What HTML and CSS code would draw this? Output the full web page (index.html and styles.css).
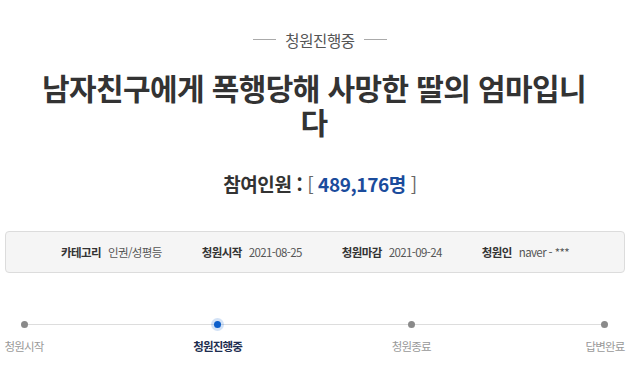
FILE: index.html
```html
<!DOCTYPE html>
<html lang="ko">
<head>
<meta charset="utf-8">
<link rel="stylesheet" href="styles.css">
</head>
<body>
<div class="page">
  <div class="status"><span class="rule"></span><span class="status-text">청원진행중</span><span class="rule"></span></div>
  <h1 class="title">남자친구에게 폭행당해 사망한 딸의 엄마입니다</h1>
  <p class="count"><span class="count-label">참여인원 :</span> <span class="bracket">[</span> <span class="count-num">489,176명</span> <span class="bracket">]</span></p>
  <div class="info">
    <div class="info-item"><span class="info-label">카테고리</span><span class="info-value">인권/성평등</span></div>
    <div class="info-item"><span class="info-label">청원시작</span><span class="info-value">2021-08-25</span></div>
    <div class="info-item"><span class="info-label">청원마감</span><span class="info-value">2021-09-24</span></div>
    <div class="info-item"><span class="info-label">청원인</span><span class="info-value">naver - ***</span></div>
  </div>
  <div class="progress">
    <div class="track"></div>
    <div class="step"><span class="dot"></span><span class="step-label">청원시작</span></div>
    <div class="step active"><span class="dot"></span><span class="step-label">청원진행중</span></div>
    <div class="step"><span class="dot"></span><span class="step-label">청원종료</span></div>
    <div class="step"><span class="dot"></span><span class="step-label">답변완료</span></div>
  </div>
</div>
</body>
</html>
```
FILE: styles.css
```css
* { box-sizing: border-box; }
html, body { margin: 0; padding: 0; background: #fff; }
body { font-family: "Noto Sans CJK KR", "Noto Sans", sans-serif; color: #333; }
.page { width: 640px; height: 375px; overflow: hidden; }

.status {
  display: flex; align-items: center; justify-content: center; gap: 9px;
  padding-top: 29px; height: 50px;
}
.status .rule { width: 23px; height: 1px; background: #aaa; }
.status-text { font-size: 15.5px; line-height: 20px; color: #555; letter-spacing: -0.4px; }

.title {
  margin: 20px 0 0 34px; width: 560px;
  font-size: 30px; font-weight: 700; line-height: 34px; text-align: center;
  letter-spacing: -0.6px; color: #333;
}

.count {
  margin: 34px 0 0; text-align: center;
  font-size: 19px; line-height: 24px; font-weight: 700; letter-spacing: -0.4px;
}
.count-label { color: #333; }
.bracket { color: #666; font-weight: 400; }
.count-num { color: #1b4c9c; }

.info {
  margin: 35px 0 0 5px; width: 620px; height: 42px;
  background: #f5f5f5; border: 1px solid #dcdcdc; border-radius: 4px;
  display: flex; align-items: center; justify-content: center; gap: 40px;
  font-size: 11.5px; letter-spacing: -0.6px;
}
.info-item { display: flex; gap: 7px; align-items: center; }
.info-label { font-weight: 700; color: #333; }
.info-value { color: #555; }

.progress {
  position: relative; margin: 48px 0 0 24px; width: 581px;
  display: flex; justify-content: space-between;
}
.track { position: absolute; left: 0; right: 0; top: 3px; height: 1px; background: #ddd; }
.step { position: relative; width: 0; display: flex; flex-direction: column; align-items: center; }
.dot { width: 7px; height: 7px; border-radius: 50%; background: #8a8a8a; }
.step-label {
  margin-top: 10px; font-size: 11.5px; line-height: 16px; white-space: nowrap;
  color: #999; letter-spacing: -0.8px;
}
.step.active .dot { background: #0b5ecb; box-shadow: 0 0 0 3px rgba(11, 94, 203, 0.18); }
.step.active .step-label { color: #1e2e50; font-weight: 700; }
```
